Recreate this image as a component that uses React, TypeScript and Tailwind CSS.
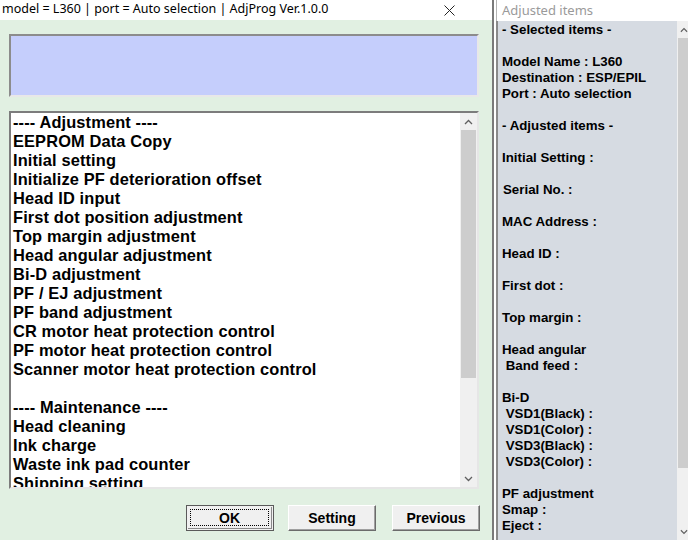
import React from "react";

const adjustItems = [
  "---- Adjustment ----",
  "EEPROM Data Copy",
  "Initial setting",
  "Initialize PF deterioration offset",
  "Head ID input",
  "First dot position adjustment",
  "Top margin adjustment",
  "Head angular adjustment",
  "Bi-D adjustment",
  "PF / EJ adjustment",
  "PF band adjustment",
  "CR motor heat protection control",
  "PF motor heat protection control",
  "Scanner motor heat protection control",
  "",
  "---- Maintenance ----",
  "Head cleaning",
  "Ink charge",
  "Waste ink pad counter",
  "Shipping setting",
];

const reportLines = [
  "- Selected items -",
  "",
  "Model Name : L360",
  "Destination : ESP/EPIL",
  "Port : Auto selection",
  "",
  "- Adjusted items -",
  "",
  "Initial Setting :",
  "",
  "Serial No. :",
  "",
  "MAC Address :",
  "",
  "Head ID :",
  "",
  "First dot :",
  "",
  "Top margin :",
  "",
  "Head angular",
  " Band feed :",
  "",
  "Bi-D",
  " VSD1(Black) :",
  " VSD1(Color) :",
  " VSD3(Black) :",
  " VSD3(Color) :",
  "",
  "PF adjustment",
  "Smap :",
  "Eject :",
];

function Arrow({ up }: { up?: boolean }) {
  return (
    <svg width="9" height="6" viewBox="0 0 9 6" className="block">
      <polyline
        points={up ? "1,5 4.5,1.5 8,5" : "1,1 4.5,4.5 8,1"}
        fill="none"
        stroke="#606060"
        strokeWidth="1.3"
      />
    </svg>
  );
}

function WinButton({ label, isDefault }: { label: string; isDefault?: boolean }) {
  if (isDefault) {
    return (
      <button className="w-[88px] h-[26px] border border-[#5a5a5a] bg-[#f0f0f0] p-[1px]">
        <div className="h-full border-r border-b border-[#8a8a8a] flex p-[2px]">
          <div className="flex-1 border border-dotted border-black flex items-center justify-center text-[14px] font-bold leading-none">
            {label}
          </div>
        </div>
      </button>
    );
  }
  return (
    <button className="w-[88px] h-[26px] border border-t-white border-l-white border-r-[#6b6b6b] border-b-[#6b6b6b] bg-[#f0f0f0] flex items-center justify-center text-[14px] font-bold leading-none shadow-[inset_-1px_-1px_0_#a0a0a0]">
      {label}
    </button>
  );
}

export default function App() {
  return (
    <div
      className="w-[688px] h-[540px] flex bg-white overflow-hidden text-black"
      style={{ fontFamily: '"Liberation Sans", Arial, sans-serif' }}
    >
      {/* main window */}
      <div className="w-[494px] h-full flex flex-col border-r-2 border-[#7a7a7a]">
        <div className="h-[20px] flex items-center justify-between pl-[2px] pr-[37px] bg-white">
          <span
            className="text-[12.5px] leading-none text-black whitespace-pre -mt-[1px]"
            style={{ fontFamily: '"Noto Sans", "Noto Sans CJK SC", sans-serif' }}
          >
            model = L360 | port = Auto selection | AdjProg Ver.1.0.0
          </span>
          <svg width="11" height="11" viewBox="0 0 11 11">
            <path d="M0.5 0.5 L10.5 10.5 M10.5 0.5 L0.5 10.5" stroke="#222" strokeWidth="1" />
          </svg>
        </div>
        <div className="flex-1 bg-[#e1f0e2] px-[9px] pt-[14px] flex flex-col">
          <div className="w-[470px] h-[63px] bg-[#c5cefc] border-2 border-t-[#8c8c8c] border-l-[#8c8c8c] border-r-[#e8e8e8] border-b-[#e8e8e8]" />
          <div className="mt-[14px] w-[470px] h-[378px] bg-white border-2 border-t-[#7c7c7c] border-l-[#7c7c7c] border-r-[#e6e6e6] border-b-[#e6e6e6] flex overflow-hidden">
            <div className="flex-1 overflow-hidden pl-[2px] text-[16.4px] tracking-[0.13px] font-bold leading-[19px]">
              {adjustItems.map((t, i) => (
                <div key={i} className="h-[19px] whitespace-pre">
                  {t}
                </div>
              ))}
            </div>
            <div className="w-[17px] h-full bg-[#f0f0f0] flex flex-col">
              <div className="h-[17px] flex items-center justify-center">
                <Arrow up />
              </div>
              <div className="h-[248px] mx-[1px] bg-[#cdcdcd]" />
              <div className="flex-1" />
              <div className="h-[17px] flex items-center justify-center">
                <Arrow />
              </div>
            </div>
          </div>
          <div className="mt-[16px] flex justify-end pr-[3px]">
            <WinButton label="OK" isDefault />
            <div className="w-[14px]" />
            <WinButton label="Setting" />
            <div className="w-[16px]" />
            <WinButton label="Previous" />
          </div>
        </div>
      </div>

      {/* adjusted items window */}
      <div className="ml-[2px] flex-1 h-full flex flex-col">
        <div className="h-[21px] flex items-center pl-[5px] border-l border-[#b4b4b4]">
          <span
            className="text-[13px] leading-none text-[#9a9a9a]"
            style={{ fontFamily: '"Noto Sans", "Noto Sans CJK SC", sans-serif' }}
          >
            Adjusted items
          </span>
        </div>
        <div className="flex-1 flex border-l-2 border-[#8a8a8a] bg-[#d6dbe2] overflow-hidden">
          <div className="flex-1 pl-[4px] pt-[1px] text-[13.3px] font-bold leading-[16px] overflow-hidden">
            {reportLines.map((t, i) => (
              <div key={i} className={`h-[16px] whitespace-pre ${t === "Serial No. :" ? "pl-[1px]" : ""}`}>
                {t}
              </div>
            ))}
          </div>
          <div className="w-[11px] h-full bg-[#f0f0f0] flex flex-col overflow-hidden">
            <div className="h-[17px] flex items-center pl-[3px]">
              <Arrow up />
            </div>
            <div className="h-[430px] ml-[1px] bg-[#cdcdcd]" />
            <div className="flex-1" />
            <div className="h-[17px] flex items-center pl-[3px]">
              <Arrow />
            </div>
          </div>
        </div>
      </div>
    </div>
  );
}
